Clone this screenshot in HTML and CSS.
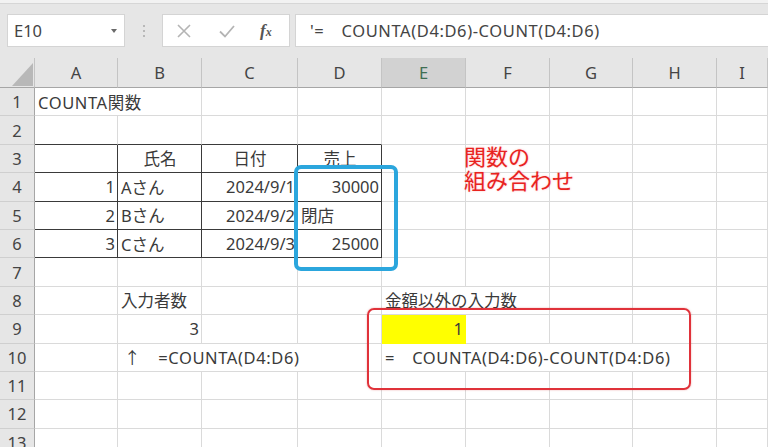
FILE: index.html
```html
<!DOCTYPE html>
<html lang="ja">
<head>
<meta charset="utf-8">
<title>COUNTA関数</title>
<link rel="stylesheet" href="styles.css">
</head>
<body>
<div class="topstrip"></div>
<div class="toolbar">
  <div class="namebox"><span>E10</span><i class="drop"></i></div>
  <div class="dots"><i></i><i></i><i></i></div>
  <div class="btnbox">
    <svg class="ic" width="20" height="20" viewBox="0 0 20 20"><path d="M4 4 L16 16 M16 4 L4 16" stroke="#b4b4b4" stroke-width="1.6" fill="none"/></svg>
    <svg class="ic" width="20" height="20" viewBox="0 0 20 20"><path d="M3 10.5 L8 15.5 L17 5" stroke="#b4b4b4" stroke-width="1.8" fill="none"/></svg>
    <span class="fx">f<small>x</small></span>
  </div>
  <div class="fbox">'=　COUNTA(D4:D6)-COUNT(D4:D6)</div>
</div>
<div class="sheet">
  <div class="corner"><svg width="35" height="30" viewBox="0 0 35 30"><polygon points="33,5 33,28 12,28" fill="#b8b8b8"/></svg></div>
  <div class="ch">A</div><div class="ch">B</div><div class="ch">C</div><div class="ch">D</div><div class="ch sel">E</div><div class="ch">F</div><div class="ch">G</div><div class="ch">H</div><div class="ch">I</div>

  <div class="rh">1</div><div class="c s2 fml">COUNTA関数</div><div class="c"></div><div class="c"></div><div class="c"></div><div class="c"></div><div class="c"></div><div class="c"></div><div class="c"></div>

  <div class="rh">2</div><div class="c bb"></div><div class="c bb"></div><div class="c bb"></div><div class="c bb"></div><div class="c"></div><div class="c"></div><div class="c"></div><div class="c"></div><div class="c"></div>

  <div class="rh">3</div><div class="c t"></div><div class="c t ctr">氏名</div><div class="c t ctr">日付</div><div class="c t ctr">売上</div><div class="c"></div><div class="c"></div><div class="c"></div><div class="c"></div><div class="c"></div>

  <div class="rh">4</div><div class="c t r">1</div><div class="c t">Aさん</div><div class="c t r">2024/9/1</div><div class="c t r">30000</div><div class="c"></div><div class="c"></div><div class="c"></div><div class="c"></div><div class="c"></div>

  <div class="rh">5</div><div class="c t r">2</div><div class="c t">Bさん</div><div class="c t r">2024/9/2</div><div class="c t">閉店</div><div class="c"></div><div class="c"></div><div class="c"></div><div class="c"></div><div class="c"></div>

  <div class="rh">6</div><div class="c t r">3</div><div class="c t">Cさん</div><div class="c t r">2024/9/3</div><div class="c t r">25000</div><div class="c"></div><div class="c"></div><div class="c"></div><div class="c"></div><div class="c"></div>

  <div class="rh">7</div><div class="c"></div><div class="c"></div><div class="c"></div><div class="c"></div><div class="c"></div><div class="c"></div><div class="c"></div><div class="c"></div><div class="c"></div>

  <div class="rh">8</div><div class="c"></div><div class="c">入力者数</div><div class="c"></div><div class="c"></div><div class="c s2">金額以外の入力数</div><div class="c"></div><div class="c"></div><div class="c"></div>

  <div class="rh">9</div><div class="c"></div><div class="c r">3</div><div class="c"></div><div class="c"></div><div class="c r yel">1</div><div class="c"></div><div class="c"></div><div class="c"></div><div class="c"></div>

  <div class="rh">10</div><div class="c"></div><div class="c s3 fml arrow">↑　=COUNTA(D4:D6)</div><div class="c s4 fml">=　COUNTA(D4:D6)-COUNT(D4:D6)</div><div class="c"></div>

  <div class="rh">11</div><div class="c"></div><div class="c"></div><div class="c"></div><div class="c"></div><div class="c"></div><div class="c"></div><div class="c"></div><div class="c"></div><div class="c"></div>

  <div class="rh">12</div><div class="c"></div><div class="c"></div><div class="c"></div><div class="c"></div><div class="c"></div><div class="c"></div><div class="c"></div><div class="c"></div><div class="c"></div>

  <div class="rh">13</div><div class="c"></div><div class="c"></div><div class="c"></div><div class="c"></div><div class="c"></div><div class="c"></div><div class="c"></div><div class="c"></div><div class="c"></div>

  <div class="bluebox"></div>
  <div class="redbox"></div>
  <div class="note">関数の<br>組み合わせ</div>
</div>
</body>
</html>
```
FILE: styles.css
```css
* { box-sizing: border-box; }
html, body { margin: 0; padding: 0; }
body {
  width: 768px;
  height: 447px;
  overflow: hidden;
  background: #ffffff;
  font-family: "Noto Sans", "Noto Sans CJK JP", sans-serif;
  color: #333333;
}
.topstrip {
  height: 4px;
  background: #f2f2f2;
  border-bottom: 1px solid #d6d6d6;
}
.toolbar {
  height: 54px;
  background: #e6e6e6;
  display: flex;
  align-items: flex-start;
  padding-top: 10px;
}
.namebox {
  margin-left: 7px;
  width: 118px;
  height: 33px;
  background: #ffffff;
  border: 1px solid #d4d4d4;
  display: flex;
  align-items: center;
  justify-content: space-between;
  padding: 0 7px 0 6px;
  font-size: 16.5px;
  color: #444;
}
.drop {
  width: 0; height: 0;
  border-left: 3.5px solid transparent;
  border-right: 3.5px solid transparent;
  border-top: 4px solid #6a6a6a;
}
.dots {
  width: 37px;
  height: 33px;
  display: flex;
  flex-direction: column;
  align-items: center;
  justify-content: center;
  gap: 3px;
}
.dots i {
  width: 2px; height: 2px;
  background: #a8a8a8;
  border-radius: 1px;
}
.btnbox {
  width: 128px;
  height: 33px;
  background: #ffffff;
  border: 1px solid #d4d4d4;
  display: flex;
  align-items: center;
  padding-left: 11px;
  gap: 23px;
}
.fx {
  font-family: "Liberation Serif", "DejaVu Serif", serif;
  font-style: italic;
  font-weight: bold;
  font-size: 17px;
  color: #555;
}
.fx small { font-size: 12px; }
.fbox {
  margin-left: 5px;
  flex: 1;
  height: 33px;
  background: #ffffff;
  border: 1px solid #d4d4d4;
  border-right: none;
  font-size: 16.5px;
  letter-spacing: 0.6px;
  color: #444;
  line-height: 31px;
  padding-left: 14px;
  white-space: nowrap;
}
.sheet {
  position: relative;
  display: grid;
  grid-template-columns: 35px 83px 84px 96px 84px 84px 84px 83px 84px 51px;
  grid-template-rows: 30px repeat(13, 28.4px);
  font-size: 16.5px;
}
.corner {
  background: #e6e6e6;
  border-right: 1px solid #c4c4c4;
  border-bottom: 1px solid #a6a6a6;
}
.corner svg { display: block; }
.ch {
  background: #e6e6e6;
  border-right: 1px solid #c4c4c4;
  border-bottom: 1px solid #a6a6a6;
  display: flex;
  align-items: center;
  justify-content: center;
  color: #444;
}
.ch.sel {
  background: #d2d2d2;
  color: #3f6e52;
}
.rh {
  background: #e6e6e6;
  border-right: 1px solid #a6a6a6;
  border-bottom: 1px solid #cfcfcf;
  display: flex;
  align-items: center;
  justify-content: center;
  color: #444;
}
.c {
  border-right: 1px solid #dadada;
  border-bottom: 1px solid #dadada;
  display: flex;
  align-items: center;
  padding: 0 2px 0 3px;
  white-space: nowrap;
  overflow: visible;
  color: #3a3a3a;
}
.c.fml { letter-spacing: 0.6px; }
.c.arrow { padding-left: 6px; }
.c.s2 { grid-column: span 2; }
.c.s3 { grid-column: span 3; }
.c.s4 { grid-column: span 4; }
.c.r { justify-content: flex-end; padding-right: 2px; }
.c.ctr { justify-content: center; }
.c.bb { border-bottom-color: #3a3a3a; }
.c.t { border-right-color: #3a3a3a; border-bottom-color: #3a3a3a; }
.c.yel { background: #ffff00; border-right-color: #ffff00; border-bottom-color: #ffff00; }
.bluebox {
  position: absolute;
  left: 294px;
  top: 107px;
  width: 104px;
  height: 106px;
  border: 4px solid #2ba6dd;
  border-radius: 7px;
}
.redbox {
  position: absolute;
  left: 367px;
  top: 250px;
  width: 324px;
  height: 82px;
  border: 2px solid #e0323a;
  border-radius: 7px;
  box-shadow: 0 0 2px rgba(200, 0, 0, 0.35);
}
.note {
  position: absolute;
  left: 464px;
  top: 85px;
  font-family: "Noto Sans CJK JP", sans-serif;
  font-size: 22px;
  line-height: 24px;
  color: #e8231f;
  text-shadow: 0 0 2px rgba(255, 60, 60, 0.35);
  white-space: nowrap;
}
```
